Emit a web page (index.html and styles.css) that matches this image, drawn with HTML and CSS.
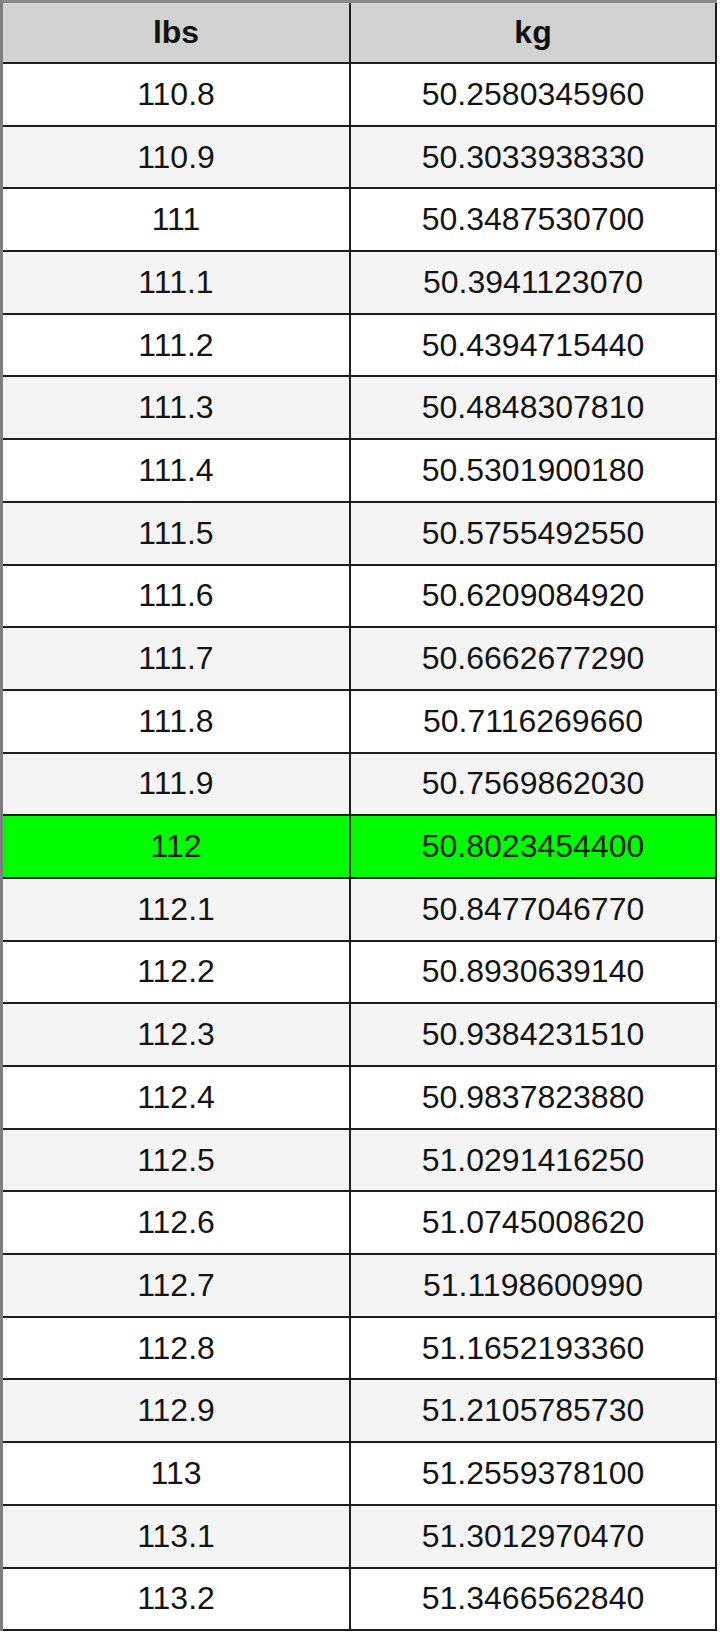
FILE: index.html
```html
<!DOCTYPE html>
<html>
<head>
<meta charset="utf-8">
<link rel="stylesheet" href="styles.css">
</head>
<body>
<div class="table">
  <div class="row head"><div class="cell c1">lbs</div><div class="cell c2">kg</div></div>
  <div class="row"><div class="cell c1">110.8</div><div class="cell c2">50.2580345960</div></div>
  <div class="row alt"><div class="cell c1">110.9</div><div class="cell c2">50.3033938330</div></div>
  <div class="row"><div class="cell c1">111</div><div class="cell c2">50.3487530700</div></div>
  <div class="row alt"><div class="cell c1">111.1</div><div class="cell c2">50.3941123070</div></div>
  <div class="row"><div class="cell c1">111.2</div><div class="cell c2">50.4394715440</div></div>
  <div class="row alt"><div class="cell c1">111.3</div><div class="cell c2">50.4848307810</div></div>
  <div class="row"><div class="cell c1">111.4</div><div class="cell c2">50.5301900180</div></div>
  <div class="row alt"><div class="cell c1">111.5</div><div class="cell c2">50.5755492550</div></div>
  <div class="row"><div class="cell c1">111.6</div><div class="cell c2">50.6209084920</div></div>
  <div class="row alt"><div class="cell c1">111.7</div><div class="cell c2">50.6662677290</div></div>
  <div class="row"><div class="cell c1">111.8</div><div class="cell c2">50.7116269660</div></div>
  <div class="row alt"><div class="cell c1">111.9</div><div class="cell c2">50.7569862030</div></div>
  <div class="row hl"><div class="cell c1">112</div><div class="cell c2">50.8023454400</div></div>
  <div class="row alt"><div class="cell c1">112.1</div><div class="cell c2">50.8477046770</div></div>
  <div class="row"><div class="cell c1">112.2</div><div class="cell c2">50.8930639140</div></div>
  <div class="row alt"><div class="cell c1">112.3</div><div class="cell c2">50.9384231510</div></div>
  <div class="row"><div class="cell c1">112.4</div><div class="cell c2">50.9837823880</div></div>
  <div class="row alt"><div class="cell c1">112.5</div><div class="cell c2">51.0291416250</div></div>
  <div class="row"><div class="cell c1">112.6</div><div class="cell c2">51.0745008620</div></div>
  <div class="row alt"><div class="cell c1">112.7</div><div class="cell c2">51.1198600990</div></div>
  <div class="row"><div class="cell c1">112.8</div><div class="cell c2">51.1652193360</div></div>
  <div class="row alt"><div class="cell c1">112.9</div><div class="cell c2">51.2105785730</div></div>
  <div class="row"><div class="cell c1">113</div><div class="cell c2">51.2559378100</div></div>
  <div class="row alt"><div class="cell c1">113.1</div><div class="cell c2">51.3012970470</div></div>
  <div class="row"><div class="cell c1">113.2</div><div class="cell c2">51.3466562840</div></div>
</div>
</body>
</html>
```

FILE: styles.css
```css
html, body {
  margin: 0;
  padding: 0;
  background: #ffffff;
}

.table {
  display: flex;
  flex-direction: column;
  gap: 2px;
  width: max-content;
  background: #1e1e1e;
  border-left: 3px solid #7e7e7e;
  border-top: 3px solid #8a8a8a;
  padding: 0 2px 2px 0;
  font-family: "Liberation Sans", Arial, sans-serif;
  font-size: 32px;
  color: #141414;
}

.row {
  display: flex;
  gap: 2px;
  height: 60.7px;
  background: #1e1e1e;
}

.row .cell {
  background: #ffffff;
}

.row.alt .cell {
  background: #f4f4f4;
}

.row.hl .cell {
  background: #00fc00;
  color: #0c1f0c;
}

.row.head {
  height: 59px;
}

.row.head .cell {
  background: #d2d2d2;
  font-weight: bold;
  color: #111111;
}

.cell {
  display: flex;
  align-items: center;
  justify-content: center;
}

.c1 {
  width: 346px;
}

.c2 {
  width: 364px;
}
```
